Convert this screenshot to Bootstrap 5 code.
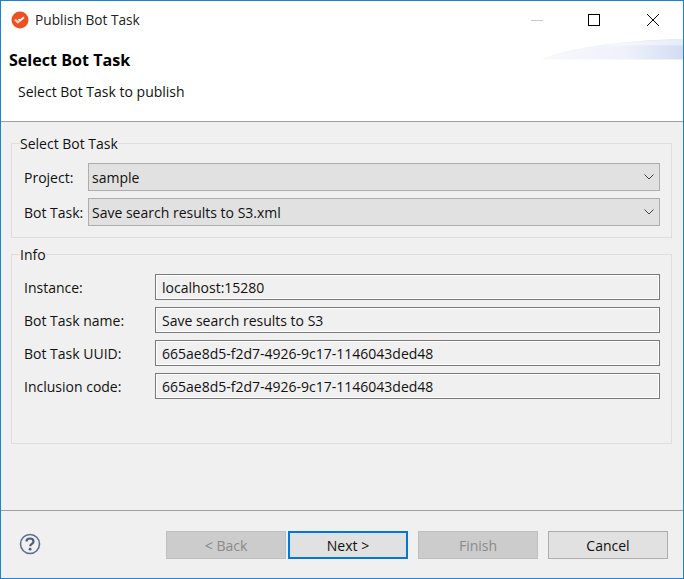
<!DOCTYPE html>
<html lang="en">
<head>
<meta charset="utf-8">
<title>Publish Bot Task</title>
<link href="https://cdn.jsdelivr.net/npm/bootstrap@5.3.0/dist/css/bootstrap.min.css" rel="stylesheet">
<style>
html,body{height:100%;margin:0;overflow:hidden}
body{font-family:"Open Sans","Noto Sans",sans-serif;font-size:14px;color:#111;background:#f0f0f0}
.dlg{height:579px;border:1px solid #1a83d4;background:#f0f0f0}
.dlg-title{height:37px;background:#fff;padding-left:10px}
.dlg-title-text{margin-left:6px;font-size:13.7px;color:#222;padding-top:1px}
.win-btn{width:58px;height:37px}
.win-btn-row{margin-right:1px}
.win-btn-mid{margin-right:1px;margin-left:-1px}
.dlg-banner{height:84px;background:#fff;border-bottom:1px solid #a0a0a0;position:relative;padding-left:8px}
.banner-swoosh{position:absolute;right:0;top:1px}
.banner-h{font-size:16.1px;font-weight:700;color:#000;line-height:20px;margin:12px 0 0}
.banner-sub{font-size:14px;line-height:20px;margin:12px 0 0 9px;color:#111}
.dlg-main{padding:12px 11px 0 10px}
.grp{border:1px solid #dedede;margin:0;padding:0 11px 10px 12px}
.grp>legend{float:none;width:auto;font-size:14px;line-height:19px;margin:0 0 0 -4px;padding:0;color:#111}
.grp-sel{height:104px}
.grp-info{height:199px;margin-top:7px}
.fld-label{font-size:14px;line-height:20px;color:#111;flex:none;padding-top:1px}
.fld-sel-label{width:64px}
.fld-inp-label{width:131px}
.fld-sel.form-select{height:28px;padding:2px 30px 0 3px;border:1px solid #adadad;border-radius:0;background-color:#e1e1e1;font-size:14px;color:#111;box-shadow:none;flex:1 1 auto;width:auto;background-size:10px 6px;background-position:right 5px center;line-height:24px;
background-image:url("data:image/svg+xml,%3Csvg xmlns='http://www.w3.org/2000/svg' viewBox='0 0 10 6'%3E%3Cpath d='M.5.500L5 5l4.500-4.500' fill='none' stroke='%23444' stroke-width='1'/%3E%3C/svg%3E")}
.fld-inp.form-control{height:26px;padding:0 6px;border:1px solid #7a7a7a;border-radius:0;background:#f0f0f0;font-size:14px;color:#111;box-shadow:inset 0 0 0 1px #fff;flex:1 1 auto;width:auto;line-height:24px}
.sel-row{margin-top:7px}
.sel-row:first-of-type{margin-top:10px}
.inp-row{margin-top:7px}
.inp-row:first-of-type{margin-top:10px}
.dlg-foot{border-top:1px solid #a0a0a0;margin-top:66px;padding:20px 15px 0 18px}
.help-ico{margin-top:-2px}
.dlg-btn.btn{width:120px;height:28px;padding:1px 0 0;border:1px solid #adadad;border-radius:0;background:#e1e1e1;color:#111;font-size:14px;line-height:25px}
.dlg-btn.btn:disabled{background:#ccc;border-color:#bfbfbf;color:#8a8a8a;opacity:1}
.dlg-btn.dlg-btn-def{border:2px solid #0078d7;line-height:23px}
.btn-gap{margin-left:10px}
.btn-tight{margin-left:2px}
</style>
</head>
<body>
<div class="dlg d-flex flex-column">
  <div class="dlg-title d-flex align-items-center">
    <svg width="18" height="18" viewBox="0 0 18 18" aria-hidden="true"><circle cx="9" cy="9" r="8.500" fill="#ee4f22"/><path d="M4 8.500l2.800 2.800 6.200-5" fill="none" stroke="#fbd5c8" stroke-width="2"/><path d="M7.500 8l1.600 1.600 3.500-2.800" fill="none" stroke="#fff" stroke-width="1.400"/></svg>
    <span class="dlg-title-text flex-grow-1">Publish Bot Task</span>
    <div class="d-flex win-btn-row">
      <div class="win-btn d-flex align-items-center justify-content-center"><svg width="12" height="12" viewBox="0 0 12 12"><path d="M0 6.500h12" stroke="#c8c8c8" fill="none"/></svg></div>
      <div class="win-btn win-btn-mid d-flex align-items-center justify-content-center"><svg width="12" height="12" viewBox="0 0 12 12"><rect x=".5" y=".5" width="11" height="11" fill="none" stroke="#000"/></svg></div>
      <div class="win-btn d-flex align-items-center justify-content-center"><svg width="12" height="12" viewBox="0 0 12 12"><path d="M0 0l12 12M12 0L0 12" stroke="#000" fill="none"/></svg></div>
    </div>
  </div>
  <div class="dlg-banner">
    <svg class="banner-swoosh" width="142" height="21" viewBox="0 0 142 21" aria-hidden="true"><defs><linearGradient id="sw" x1="0" x2="1"><stop offset="0" stop-color="#f8f9fd"/><stop offset=".6" stop-color="#eef1fa"/><stop offset="1" stop-color="#d2dcf3"/></linearGradient></defs><path d="M0 20.500C20 10 80 1 142 0V20.500Z" fill="url(#sw)"/><path d="M60 7C90 3 120 1 142 0V6.500C115 6 85 6.500 60 7Z" fill="#fff" opacity=".45"/></svg>
    <p class="banner-h">Select Bot Task</p>
    <p class="banner-sub">Select Bot Task to publish</p>
  </div>
  <div class="dlg-main">
    <fieldset class="grp grp-sel">
      <legend>Select Bot Task</legend>
      <div class="d-flex align-items-center sel-row"><label class="fld-label fld-sel-label">Project:</label><select class="form-select fld-sel"><option>sample</option></select></div>
      <div class="d-flex align-items-center sel-row"><label class="fld-label fld-sel-label">Bot Task:</label><select class="form-select fld-sel"><option>Save search results to S3.xml</option></select></div>
    </fieldset>
    <fieldset class="grp grp-info">
      <legend>Info</legend>
      <div class="d-flex align-items-center inp-row"><label class="fld-label fld-inp-label">Instance:</label><input class="form-control fld-inp" readonly value="localhost:15280"></div>
      <div class="d-flex align-items-center inp-row"><label class="fld-label fld-inp-label">Bot Task name:</label><input class="form-control fld-inp" readonly value="Save search results to S3"></div>
      <div class="d-flex align-items-center inp-row"><label class="fld-label fld-inp-label">Bot Task UUID:</label><input class="form-control fld-inp" readonly value="665ae8d5-f2d7-4926-9c17-1146043ded48"></div>
      <div class="d-flex align-items-center inp-row"><label class="fld-label fld-inp-label">Inclusion code:</label><input class="form-control fld-inp" readonly value="665ae8d5-f2d7-4926-9c17-1146043ded48"></div>
    </fieldset>
  </div>
  <div class="dlg-foot d-flex align-items-center">
    <svg class="help-ico" width="22" height="22" viewBox="0 0 22 22" aria-hidden="true"><circle cx="11" cy="11" r="9.500" fill="none" stroke="#5f6f90" stroke-width="1.600"/><path d="M7.500 8.500C7.500 6.500 9 5.500 11 5.500s3.500 1.100 3.500 3c0 2.300-3.300 2.500-3.300 4.800" fill="none" stroke="#4f5d7d" stroke-width="2.200"/><circle cx="11.100" cy="16.200" r="1.400" fill="#4f5d7d"/></svg>
    <div class="d-flex ms-auto">
      <button class="btn dlg-btn" disabled>&lt; Back</button>
      <button class="btn dlg-btn dlg-btn-def btn-tight">Next &gt;</button>
      <button class="btn dlg-btn btn-gap" disabled>Finish</button>
      <button class="btn dlg-btn btn-gap">Cancel</button>
    </div>
  </div>
</div>
<script src="https://cdn.jsdelivr.net/npm/bootstrap@5.3.0/dist/js/bootstrap.bundle.min.js"></script>
</body>
</html>
